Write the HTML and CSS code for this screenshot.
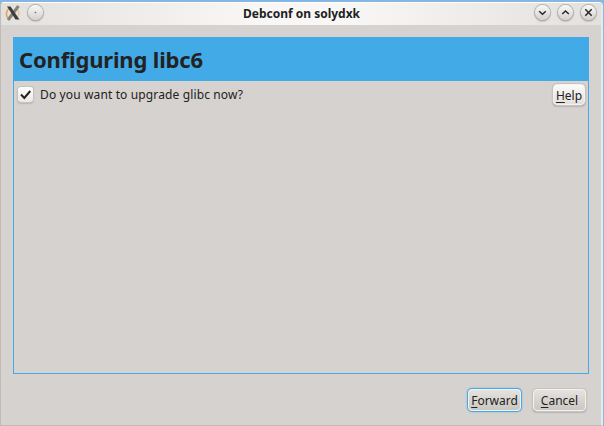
FILE: index.html
```html
<!DOCTYPE html>
<html lang="en">
<head>
<meta charset="utf-8">
<title>Debconf on solydxk</title>
<link rel="stylesheet" href="styles.css">
</head>
<body>
<div class="desktop">
<main class="window">
  <header class="titlebar">
    <div class="group">
      <svg class="app-icon" width="16" height="16" viewBox="0 0 16 16"><path d="M4 3.500C1 6 .5 10 3 13" fill="none" stroke="#eba04d" stroke-width="1.600"/><path d="M12 4c2.500 2 2.500 6 .5 8" fill="none" stroke="#f0c088" stroke-width="1.300"/><path d="M13.500 1 3 15" stroke="#85837b" stroke-width="3"/><path d="M2 1.500h3.500L14.500 14.500h-4z" fill="#3c3d3c"/></svg>
      <span class="round"><svg width="15" height="15" viewBox="0 0 15 15"><circle cx="7.5" cy="7.5" r=".8" fill="#666"/></svg></span>
    </div>
    <h1 class="title">Debconf on solydxk</h1>
    <div class="group controls">
      <span class="round"><svg width="15" height="15" viewBox="0 0 15 15"><path d="M4.200 6.200l3.300 3 3.300-3"/></svg></span>
      <span class="round"><svg width="15" height="15" viewBox="0 0 15 15"><path d="M4.200 9l3.300-3 3.300 3"/></svg></span>
      <span class="round"><svg width="15" height="15" viewBox="0 0 15 15"><path d="M4.300 4.300l6.400 6.400M10.700 4.300l-6.400 6.400"/></svg></span>
    </div>
  </header>
  <section class="panel">
    <h2 class="banner">Configuring libc6</h2>
    <div class="question">
      <span class="check"><svg width="15" height="15" viewBox="0 0 15 15"><path d="M3 7.500l3.300 3.500 6-7"/></svg></span>
      <span class="label">Do you want to upgrade glibc now?</span>
      <button class="btn help"><u>H</u>elp</button>
    </div>
  </section>
  <footer class="actions">
    <button class="btn forward"><u>F</u>orward</button>
    <button class="btn cancel"><u>C</u>ancel</button>
  </footer>
</main>
</div>
</body>
</html>
```
FILE: styles.css
```css
* { box-sizing: border-box; }
body { margin: 0; font: 12px "Noto Sans", sans-serif; color: #222; }
.desktop { width: 604px; height: 426px; padding: 2px 1px 0 0; background: #85b7e2; overflow: hidden; }
.window { height: 424px; background: #d6d2cf; border: 1px solid #c3b9b7; border-top-color: #fff; border-right: 2px solid #ebe9e7; border-radius: 4px 4px 0 0; display: flex; flex-direction: column; }
.titlebar { height: 22px; flex: none; display: flex; align-items: center; justify-content: space-between; padding: 0 5px 2px 4px; background: linear-gradient(90deg, #e3e1de, #f8f7f6 42%, #f8f7f6 58%, #e3e1de); border-radius: 3px 3px 0 0; }
.group { display: flex; align-items: center; gap: 7px; width: 80px; }
.group.controls { justify-content: flex-end; gap: 8px; }
.round { width: 15px; height: 15px; margin-bottom: 2px; border-radius: 50%; background: linear-gradient(#f9f9f8, #d4d1ce); box-shadow: 0 0 0 1px #b5b1ad, 0 1px 2px #777; display: flex; }
.round path { fill: none; stroke: #292929; stroke-width: 1.5; }
.title { margin: 0; padding: 1px 0 0 2px; font-size: 12px; line-height: 20px; font-weight: 700; }
.panel { margin: 12px 12px 0; height: 337px; flex: none; border: 1px solid #43aae8; }
.banner { margin: 0; height: 43px; padding-left: 5px; background: #43aae8; font-size: 22px; line-height: 43px; letter-spacing: -.17px; font-weight: 700; }
.question { display: flex; align-items: center; padding: 1px 3px 0 4px; height: 26px; }
.check { width: 15px; height: 15px; border-radius: 3px; background: linear-gradient(#fff, #eae8e6); box-shadow: 0 0 0 1px #c6c2be, 0 1px 2px #777; display: flex; }
.check path { fill: none; stroke: #222; stroke-width: 2; }
.label { margin-left: 7px; flex: 1; letter-spacing: .13px; }
.btn { appearance: none; font: inherit; color: #222; border: 1px solid #f4f2f0; padding: 1px 0 0; margin: 0; border-radius: 4px; background: linear-gradient(#e5e2df, #cbc7c2); box-shadow: 0 0 0 1px #c6c2be, 0 1px 2px #777; white-space: nowrap; }
.btn u { text-underline-offset: 2px; text-decoration-thickness: 1px; text-decoration-skip-ink: none; }
.help { width: 32px; height: 21px; background: linear-gradient(#fbfbfa, #e3e0dd); }
.actions { display: flex; justify-content: flex-end; gap: 12px; margin: 15px 15px 0; }
.forward { width: 53px; height: 22px; box-shadow: 0 0 0 1px #43aae8, 0 0 3px #43aae8; }
.cancel { width: 53px; height: 22px; }
```
